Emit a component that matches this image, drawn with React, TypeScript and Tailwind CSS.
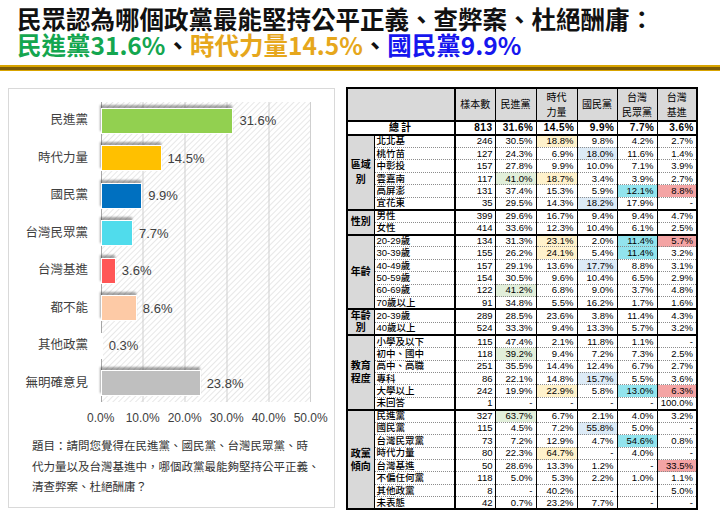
const bars = [
  { label: '民進黨', v: 31.6, color: 'bg-[#92d050]' },
  { label: '時代力量', v: 14.5, color: 'bg-[#ffc000]' },
  { label: '國民黨', v: 9.9, color: 'bg-[#0070c0]' },
  { label: '台灣民眾黨', v: 7.7, color: 'bg-[#50dcec]' },
  { label: '台灣基進', v: 3.6, color: 'bg-[#ff5656]' },
  { label: '都不能', v: 8.6, color: 'bg-[#fdcaa6]' },
  { label: '其他政黨', v: 0.3, color: 'bg-[#bfbfbf]' },
  { label: '無明確意見', v: 23.8, color: 'bg-[#bfbfbf]' },
];

const ticks = ['0.0%', '10.0%', '20.0%', '30.0%', '40.0%', '50.0%'];

const hl: Record<string, string> = {
  g: 'bg-[#e2efda]',
  y: 'bg-[#fff2cc]',
  b: 'bg-[#ddebf7]',
  c: 'bg-[#92e4ee]',
  p: 'bg-[#f4a4a4]',
};

type Group = { name: string[]; lead: string; rows: string[][] };

const groups: Group[] = [
  {
    name: ['區域', '別'],
    lead: 'leading-[15px]',
    rows: [
      ['北北基', '246', '30.5%', '18.8%|y', '9.8%', '4.2%', '2.7%'],
      ['桃竹苗', '127', '24.3%', '6.9%', '18.0%|b', '11.6%', '1.4%'],
      ['中彰投', '157', '27.8%', '9.9%', '10.0%', '7.1%', '3.9%'],
      ['雲嘉南', '117', '41.0%|g', '18.7%|y', '3.4%', '3.9%', '2.7%'],
      ['高屏澎', '131', '37.4%', '15.3%', '5.9%', '12.1%|c', '8.8%|p'],
      ['宜花東', '35', '29.5%', '14.3%', '18.2%|b', '17.9%', '-'],
    ],
  },
  {
    name: ['性別'],
    lead: 'leading-[10px]',
    rows: [
      ['男性', '399', '29.6%', '16.7%', '9.4%', '9.4%', '4.7%'],
      ['女性', '414', '33.6%', '12.3%', '10.4%', '6.1%', '2.5%'],
    ],
  },
  {
    name: ['年齡'],
    lead: 'leading-[10px]',
    rows: [
      ['20-29歲', '134', '31.3%', '23.1%|y', '2.0%', '11.4%|c', '5.7%|p'],
      ['30-39歲', '155', '26.2%', '24.1%|y', '5.4%', '11.4%|c', '3.2%'],
      ['40-49歲', '157', '29.1%', '13.6%', '17.7%|b', '8.8%', '3.1%'],
      ['50-59歲', '154', '30.5%', '9.6%', '10.4%', '6.5%', '2.9%'],
      ['60-69歲', '122', '41.2%|g', '6.8%', '9.0%', '3.7%', '4.8%'],
      ['70歲以上', '91', '34.8%', '5.5%', '16.2%', '1.7%', '1.6%'],
    ],
  },
  {
    name: ['年齡', '別'],
    lead: 'leading-[12px]',
    rows: [
      ['20-39歲', '289', '28.5%', '23.6%', '3.8%', '11.4%', '4.3%'],
      ['40歲以上', '524', '33.3%', '9.4%', '13.3%', '5.7%', '3.2%'],
    ],
  },
  {
    name: ['教育', '程度'],
    lead: 'leading-[13px]',
    rows: [
      ['小學及以下', '115', '47.4%', '2.1%', '11.8%', '1.1%', '-'],
      ['初中、國中', '118', '39.2%|g', '9.4%', '7.2%', '7.3%', '2.5%'],
      ['高中、高職', '251', '35.5%', '14.4%', '12.4%', '6.7%', '2.7%'],
      ['專科', '86', '22.1%', '14.8%', '15.7%|b', '5.5%', '3.6%'],
      ['大學以上', '242', '19.9%', '22.9%|y', '5.8%', '13.0%|c', '6.3%|p'],
      ['未回答', '1', '-', '-', '-', '-', '100.0%'],
    ],
  },
  {
    name: ['政黨', '傾向'],
    lead: 'leading-[13px]',
    rows: [
      ['民進黨', '327', '63.7%|g', '6.7%', '2.1%', '4.0%', '3.2%'],
      ['國民黨', '115', '4.5%', '7.2%', '55.8%|b', '5.0%', '-'],
      ['台灣民眾黨', '73', '7.2%', '12.9%', '4.7%', '54.6%|c', '0.8%'],
      ['時代力量', '80', '22.3%', '64.7%|y', '-', '4.0%', '-'],
      ['台灣基進', '50', '28.6%', '13.3%', '1.2%', '-', '33.5%|p'],
      ['不偏任何黨', '118', '5.0%', '5.3%', '2.2%', '1.0%', '1.1%'],
      ['其他政黨', '8', '-', '40.2%', '-', '-', '5.0%'],
      ['未表態', '42', '0.7%', '23.2%', '7.7%', '-', '-'],
    ],
  },
];

function PlotBackground() {
  return (
    <svg className="absolute inset-0" width="210" height="300">
      <defs>
        <pattern id="hatch" width="4" height="4" patternUnits="userSpaceOnUse" patternTransform="rotate(45)">
          <line x1="0" y1="0" x2="0" y2="4" stroke="#d6d6d6" strokeWidth="1.2" />
        </pattern>
      </defs>
      <rect width="210" height="300" fill="url(#hatch)" />
      {[42, 84, 126, 168, 209.5].map((x) => (
        <line key={x} x1={x} y1="0" x2={x} y2="300" stroke="#cfcfcf" strokeWidth="1" />
      ))}
      <line x1="0.5" y1="0" x2="0.5" y2="300" stroke="#a6a6a6" strokeWidth="1" />
    </svg>
  );
}

function Chart() {
  return (
    <div className="ml-[8px] mt-[1px] flex h-[420px] w-[327px] flex-col border border-[#d9d9d9] bg-white">
      <div className="mt-[13px] flex">
        <div className="flex w-[79px] flex-col">
          {bars.map((b) => (
            <div key={b.label} className="flex h-[37.5px] items-center justify-end text-[12.5px] text-[#404040]">
              {b.label}
            </div>
          ))}
        </div>
        <div className="relative ml-[12.7px] h-[300px] w-[210px]">
          <PlotBackground />
          <div className="relative flex flex-col">
            {bars.map((b) => (
              <div key={b.label} className="flex h-[37.5px] items-center">
                <div
                  className={`h-[26px] border border-white ${b.color} ${b.v >= 1 ? 'shadow-[-1px_-3px_2px_rgba(0,0,0,0.35)]' : ''}`}
                  style={{ width: b.v * 4.2 }}
                />
                <span className="ml-[6px] text-[13px] text-[#404040]">{b.v.toFixed(1)}%</span>
              </div>
            ))}
          </div>
        </div>
      </div>
      <div className="ml-[70.7px] mt-[8px] flex h-[16px]">
        {ticks.map((t) => (
          <div key={t} className="w-[42px] text-center text-[12px] leading-[16px] text-[#404040]">
            {t}
          </div>
        ))}
      </div>
      <p className="ml-[23px] mt-[10px] text-[11.5px] leading-[20.5px] text-[#333]">
        題目：請問您覺得在民進黨、國民黨、台灣民眾黨、時
        <br />
        代力量以及台灣基進中，哪個政黨最能夠堅持公平正義、
        <br />
        清查弊案、杜絕酬庸？
      </p>
    </div>
  );
}

function Cell({ value, first, last }: { value: string; first: boolean; last: boolean }) {
  const [text, key] = value.split('|');
  return (
    <td
      className={`p-0 pr-[3px] text-right ${key ? hl[key] : ''} ${last ? '' : 'border-r border-r-black'} ${
        first ? 'border-t-2 border-t-black' : 'border-t border-t-[#8c8c8c] [border-top-style:dotted]'
      }`}
    >
      {text}
    </td>
  );
}

function DataTable() {
  const heads = [['樣本數'], ['民進黨'], ['時代', '力量'], ['國民黨'], ['台灣', '民眾黨'], ['台灣', '基進']];
  const totals = ['31.6%', '14.5%', '9.9%', '7.7%', '3.6%'];
  return (
    <table className="ml-[11px] h-[420px] w-[350px] table-fixed border-collapse border-2 border-black text-[9.5px] leading-[10px] text-black">
      <colgroup>
        <col className="w-[27px]" />
        <col className="w-[81px]" />
        <col className="w-[40px]" />
        <col className="w-[41px]" />
        <col className="w-[41px]" />
        <col className="w-[40px]" />
        <col className="w-[40px]" />
        <col className="w-[40px]" />
      </colgroup>
      <thead>
        <tr className="h-[33px] bg-[#d9d9d9]">
          <th colSpan={2} className="border-r-2 border-r-black p-0" />
          {heads.map((h, i) => (
            <th
              key={i}
              className={`p-0 text-center text-[10px] font-normal leading-[15px] ${i < 5 ? 'border-r border-r-black' : ''}`}
            >
              {h.map((l) => (
                <div key={l}>{l}</div>
              ))}
            </th>
          ))}
        </tr>
      </thead>
      <tbody>
        <tr className="h-[14px] border-t-2 border-t-black text-[10px] font-bold">
          <td colSpan={2} className="border-r-2 border-r-black p-0 text-center tracking-[2px]">
            總計
          </td>
          <td className="border-r border-r-black p-0 pr-[2px] text-right tracking-[0.5px]">813</td>
          {totals.map((t, i) => (
            <td
              key={t}
              className={`p-0 pr-[2px] text-right tracking-[0.5px] ${i < 4 ? 'border-r border-r-black' : ''}`}
            >
              {t}
            </td>
          ))}
        </tr>
        {groups.map((g) =>
          g.rows.map((r, i) => {
            const first = i === 0;
            const top = first ? 'border-t-2 border-t-black' : 'border-t border-t-[#8c8c8c] [border-top-style:dotted]';
            return (
              <tr key={g.name.join('') + r[0]} className="h-[12.45px]">
                {first && (
                  <td
                    rowSpan={g.rows.length}
                    className={`border-r border-r-black border-t-2 border-t-black bg-[#d9d9d9] p-0 text-center align-middle text-[10px] font-bold ${g.lead}`}
                  >
                    {g.name.map((n) => (
                      <div key={n}>{n}</div>
                    ))}
                  </td>
                )}
                <td className={`whitespace-nowrap border-r-2 border-r-black p-0 pl-[2px] text-left font-medium ${top}`}>
                  {r[0]}
                </td>
                <td className={`border-r border-r-black p-0 pr-[2px] text-right ${top}`}>{r[1]}</td>
                {r.slice(2).map((v, j) => (
                  <Cell key={j} value={v} first={first} last={j === 4} />
                ))}
              </tr>
            );
          }),
        )}
      </tbody>
    </table>
  );
}

export default function App() {
  return (
    <div className="relative h-[521px] w-[720px] overflow-hidden bg-white font-['Liberation_Sans','Noto_Sans_CJK_TC',sans-serif]">
      <div className="px-[17px] pt-[6px] font-['Noto_Sans_CJK_TC',sans-serif] text-[24.5px] font-bold leading-[26px]">
        <div className="text-[#111]">民眾認為哪個政黨最能堅持公平正義、查弊案、杜絕酬庸：</div>
        <div>
          <span className="text-[#14a64f]">民進黨31.6%</span>
          <span className="text-[#111]">、</span>
          <span className="text-[#e6a71c]">時代力量14.5%</span>
          <span className="text-[#111]">、</span>
          <span className="text-[#1616ee]">國民黨9.9%</span>
        </div>
      </div>
      <div className="mt-[7px]">
        <div className="h-[2px] bg-[#d9a400]" />
        <div className="h-[3px] bg-[#7d5c06]" />
        <div className="h-[1px] bg-[#d9a400]" />
      </div>
      <div className="flex pt-[16px]">
        <Chart />
        <DataTable />
      </div>
    </div>
  );
}
